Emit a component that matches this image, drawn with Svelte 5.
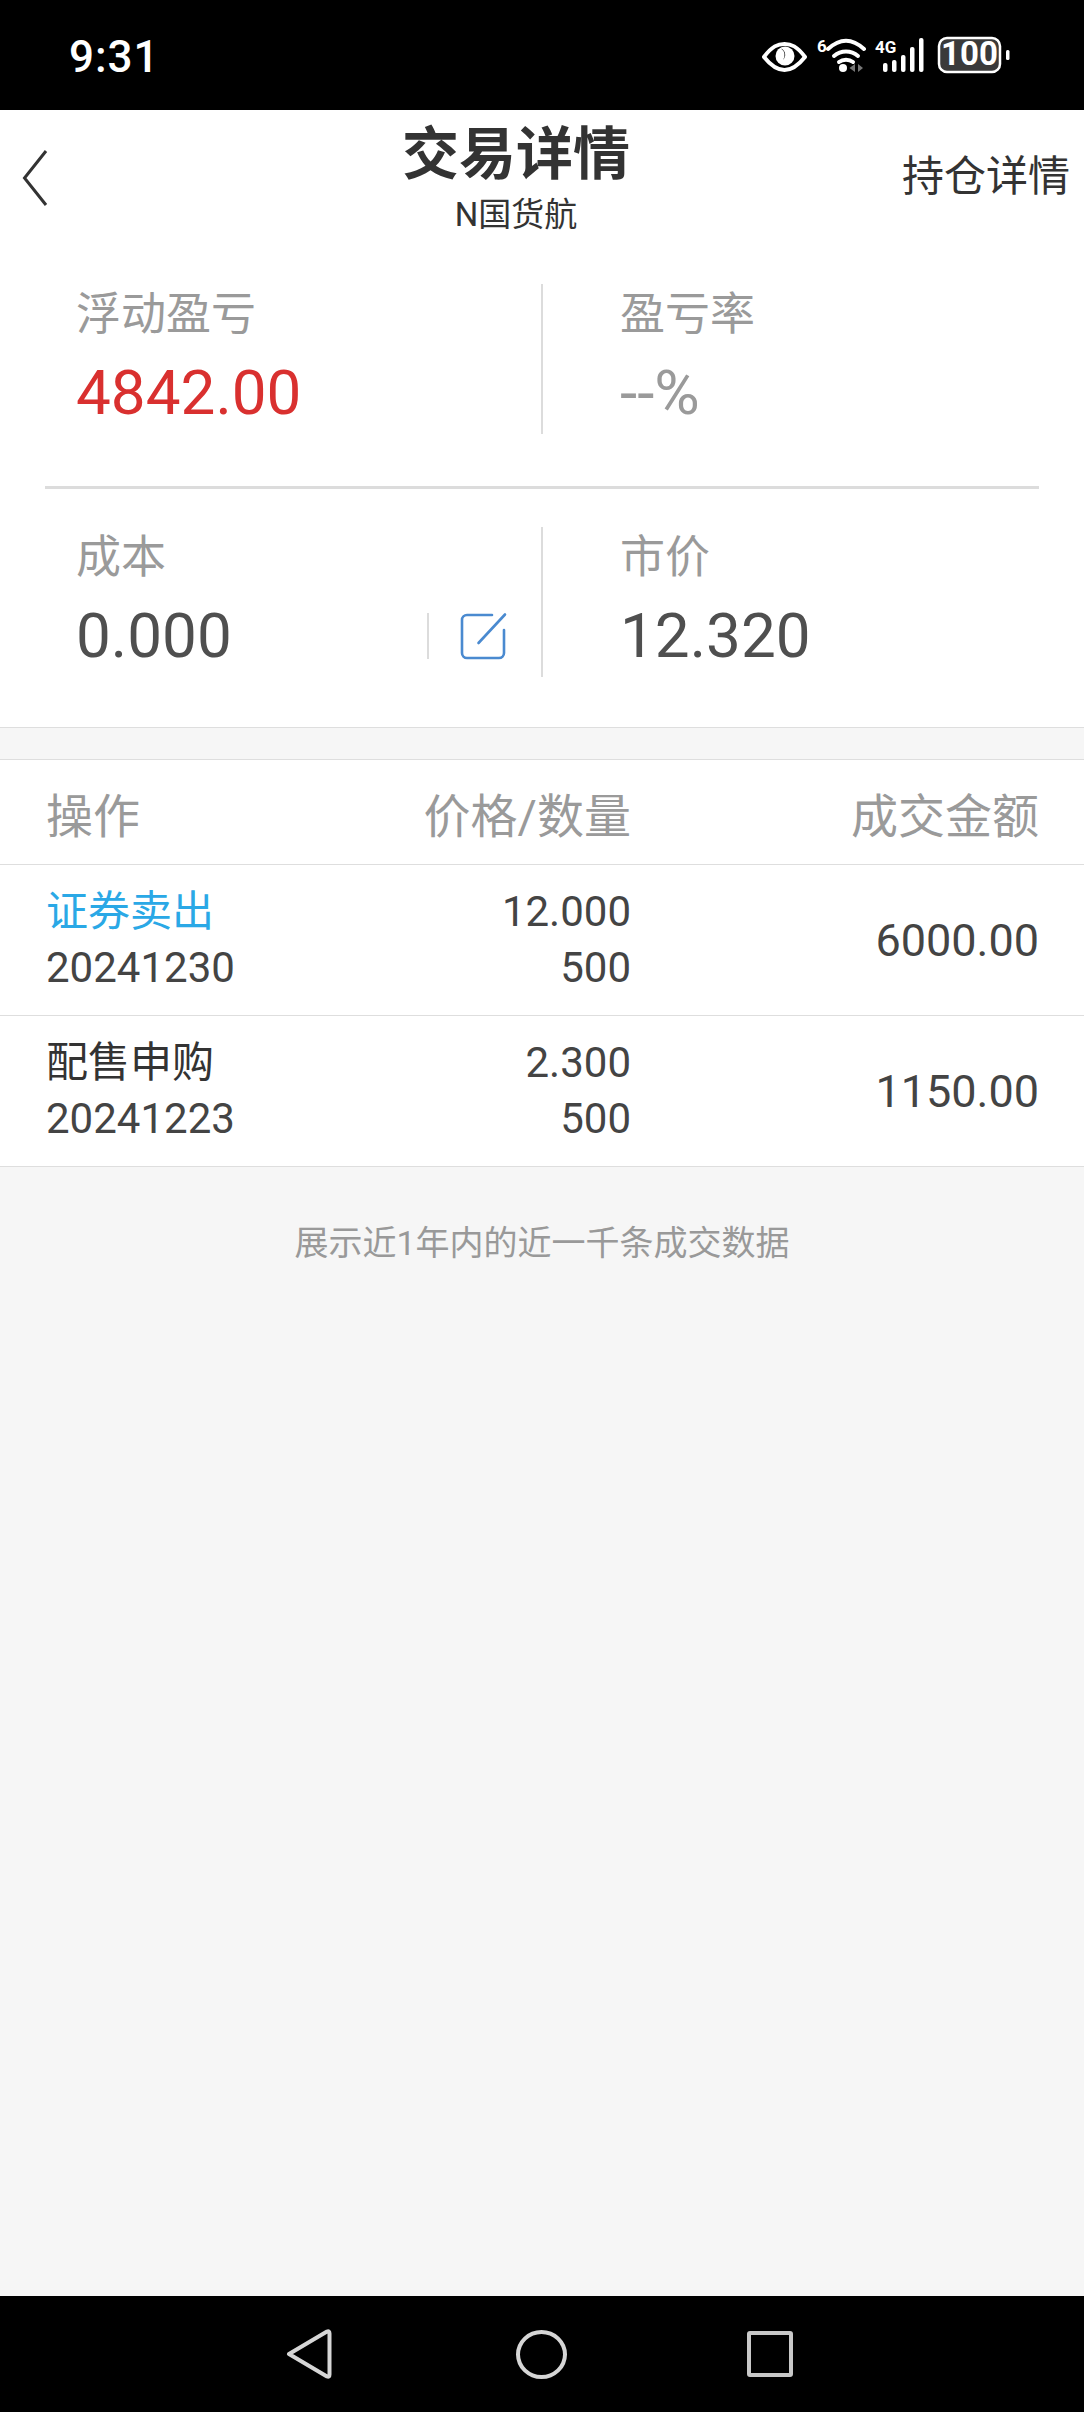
<script>
  const stats = [
    [
      { label: '浮动盈亏', value: '4842.00', tone: 'red' },
      { label: '盈亏率', value: '--%', tone: 'muted' }
    ],
    [
      { label: '成本', value: '0.000', tone: '', edit: true },
      { label: '市价', value: '12.320', tone: '' }
    ]
  ];
  const rows = [
    { op: '证券卖出', link: true, date: '20241230', price: '12.000', qty: '500', amount: '6000.00' },
    { op: '配售申购', link: false, date: '20241223', price: '2.300', qty: '500', amount: '1150.00' }
  ];
</script>

<div class="page">
  <div class="status">
    <span class="time">9:31</span>
    <svg class="sysicons" width="250" height="40" viewBox="760 36 250 40" aria-hidden="true">
      <path d="M764 57 C772 46 778 44 784.500 44 C791 44 797 46 805 57 C797 67 791 70 784.500 70 C778 70 772 67 764 57Z" fill="none" stroke="#fff" stroke-width="4" stroke-linejoin="round"/>
      <circle cx="785" cy="56" r="9.500" fill="#fff"/>
      <path d="M781 48.500 A8 8 0 0 1 783 60 A7 7 0 0 0 781 48.500Z" fill="#000"/>
      <text x="817" y="52" class="tiny">6</text>
      <path d="M828 49 C840 38 852 38 864 49" fill="none" stroke="#fff" stroke-width="4" stroke-linecap="round"/>
      <path d="M834 56 C841 50 851 50 858 56" fill="none" stroke="#fff" stroke-width="4" stroke-linecap="round"/>
      <path d="M839 62 C843 59 849 59 853 62" fill="none" stroke="#fff" stroke-width="4" stroke-linecap="round"/>
      <circle cx="843" cy="68" r="4" fill="#fff"/>
      <path d="M855 64 L849.500 68 L855 72Z M858 64 L863 68 L858 72Z" fill="#777"/>
      <text x="875" y="53" class="tiny">4G</text>
      <g fill="#fff">
        <rect x="883" y="63" width="4.500" height="9" rx="2"/>
        <rect x="892" y="60" width="4.500" height="12" rx="2"/>
        <rect x="901" y="55" width="4.500" height="17" rx="2"/>
        <rect x="910" y="47" width="4.500" height="25" rx="2"/>
        <rect x="919" y="38" width="4.500" height="34" rx="2"/>
      </g>
      <rect x="939" y="38" width="61" height="34" rx="8" fill="#3a3a3a" stroke="#fff" stroke-width="2.500"/>
      <text x="969.500" y="65" class="batt" text-anchor="middle">100</text>
      <rect x="1006" y="50" width="3.500" height="10" rx="1.500" fill="#fff"/>
    </svg>
  </div>

  <header class="head">
    <svg class="back" width="26" height="58" viewBox="0 0 26 58" aria-hidden="true">
      <path d="M24 2 L2.500 29 L24 56" fill="none" stroke="#333" stroke-width="3"/>
    </svg>
    <div class="titles">
      <div class="title">交易详情</div>
      <div class="sub">N国货航</div>
    </div>
    <div class="action">持仓详情</div>
  </header>

  <section class="stats">
    {#each stats as row, i}
      {#if i > 0}<div class="rule"></div>{/if}
      <div class="statrow">
        {#each row as s}
          <div class="stat">
            <div class="label">{s.label}</div>
            <div class="valline">
              <span class="value {s.tone}">{s.value}</span>
              {#if s.edit}
                <span class="edit">
                  <svg width="48" height="48" viewBox="0 0 48 48" aria-hidden="true">
                    <path d="M33 3 H8 A5 5 0 0 0 3 8 V41 A5 5 0 0 0 8 46 H40 A5 5 0 0 0 45 41 V18" fill="none" stroke="#4a8ad0" stroke-width="2.600" stroke-linecap="round"/>
                    <path d="M19.500 31 L46 2.500" fill="none" stroke="#4a8ad0" stroke-width="2.600" stroke-linecap="round"/>
                  </svg>
                </span>
              {/if}
            </div>
          </div>
        {/each}
      </div>
    {/each}
  </section>

  <section class="table">
    <div class="thead">
      <span>操作</span>
      <span class="r">价格/数量</span>
      <span class="r">成交金额</span>
    </div>
    {#each rows as r}
      <div class="trow">
        <div class="cell">
          <span class="op" class:link={r.link}>{r.op}</span>
          <span>{r.date}</span>
        </div>
        <div class="cell r">
          <span>{r.price}</span>
          <span>{r.qty}</span>
        </div>
        <div class="amount r">{r.amount}</div>
      </div>
    {/each}
  </section>

  <div class="note">展示近1年内的近一千条成交数据</div>

  <nav class="nav">
    <svg width="46" height="50" viewBox="0 0 46 50" aria-hidden="true">
      <path d="M3 25 L41 2.500 Q43.500 1.500 43.500 4.500 V45.500 Q43.500 48.500 41 47.500Z" fill="none" stroke="#d6d6d6" stroke-width="4" stroke-linejoin="round"/>
    </svg>
    <span class="circle"></span>
    <span class="square"></span>
  </nav>
</div>

<style>
  :global(body) {
    margin: 0;
  }
  .page {
    width: 1084px;
    height: 2412px;
    display: flex;
    flex-direction: column;
    background: #f6f6f6;
    font-family: Roboto, "Noto Sans CJK SC", sans-serif;
    color: #444;
  }
  .status {
    height: 110px;
    flex: none;
    background: #000;
    color: #fff;
    display: flex;
    align-items: center;
    justify-content: space-between;
    padding: 0 74px 0 69px;
    box-sizing: border-box;
  }
  .time {
    font-size: 44px;
    font-weight: 500;
    letter-spacing: 1px;
    line-height: 1;
    margin-top: 3px;
  }
  .sysicons {
    margin-top: 2px;
  }
  .tiny {
    fill: #fff;
    font: 700 17px Roboto, sans-serif;
  }
  .batt {
    fill: #fff;
    font: 700 33px Roboto, sans-serif;
  }
  .head {
    height: 145px;
    flex: none;
    background: #fff;
    display: grid;
    grid-template-columns: 396px 240px 1fr;
    align-items: start;
    box-sizing: border-box;
    color: #333;
  }
  .back {
    margin: 39px 0 0 22px;
  }
  .titles {
    text-align: center;
    padding-top: 11px;
  }
  .title {
    font-size: 57px;
    font-weight: 700;
    line-height: 68px;
  }
  .sub {
    font-size: 33px;
    line-height: 40px;
    margin-top: 6px;
  }
  .action {
    font-size: 42px;
    line-height: 50px;
    justify-self: end;
    margin: 42px 14px 0 0;
  }
  .stats {
    flex: none;
    background: #fff;
    padding: 29px 0 50px;
    border-bottom: 1px solid #dedede;
  }
  .statrow {
    display: grid;
    grid-template-columns: 543px 1fr;
    height: 150px;
  }
  .stat {
    box-sizing: border-box;
    padding-left: 76px;
    padding-top: 6px;
  }
  .stat:first-child {
    border-right: 2px solid #dcdcdc;
    padding-right: 34px;
  }
  .stat:last-child {
    padding-left: 77px;
  }
  .rule {
    height: 3px;
    margin: 52px 45px 38px;
    background: #dcdcdc;
  }
  .label {
    font-size: 45px;
    line-height: 50px;
    color: #9a9a9a;
  }
  .valline {
    display: flex;
    align-items: center;
    margin-top: 23px;
    height: 60px;
  }
  .value {
    font-size: 62px;
    line-height: 60px;
    color: #4f4f4f;
  }
  .value.red {
    color: #d9302f;
  }
  .value.muted {
    color: #9a9a9a;
  }
  .edit {
    margin-left: auto;
    display: flex;
    align-items: center;
    gap: 30px;
    border-left: 2px solid #dcdcdc;
    height: 46px;
    padding-left: 30px;
  }
  .edit svg {
    display: block;
  }
  .table {
    flex: none;
    margin-top: 31px;
    background: #fff;
    border-top: 1px solid #dedede;
  }
  .thead,
  .trow {
    display: grid;
    grid-template-columns: 300px 285px 1fr;
    padding: 0 45px 0 46px;
    align-items: center;
    border-bottom: 1px solid #dedede;
  }
  .thead {
    height: 105px;
    font-size: 47px;
    color: #9a9a9a;
    box-sizing: border-box;
  }
  .trow {
    height: 151px;
    font-size: 42px;
    box-sizing: border-box;
  }
  .trow:last-child {
    height: 151px;
  }
  .cell {
    display: flex;
    flex-direction: column;
    gap: 6px;
    line-height: 50.500px;
  }
  .r {
    text-align: right;
  }
  .op {
    color: #333;
  }
  .op.link {
    color: #2aa8e6;
  }
  .amount {
    font-size: 45px;
  }
  .note {
    flex: 1;
    text-align: center;
    font-size: 34px;
    line-height: 48px;
    padding-top: 52px;
    color: #999;
  }
  .nav {
    height: 116px;
    flex: none;
    background: #000;
    position: relative;
    display: grid;
    grid-template-columns: 287px 227px 234px;
    align-items: center;
  }
  .nav svg {
    justify-self: end;
    grid-column: 1;
    margin-right: -45px;
  }
  .circle {
    grid-column: 2;
    justify-self: end;
    margin-right: -53px;
    width: 43px;
    height: 41px;
    box-sizing: content-box;
    border: 4px solid #d6d6d6;
    border-radius: 50%;
  }
  .square {
    grid-column: 3;
    justify-self: end;
    margin-right: -45px;
    width: 38px;
    height: 38px;
    border: 4px solid #c8c8c8;
    border-radius: 3px;
  }
</style>
